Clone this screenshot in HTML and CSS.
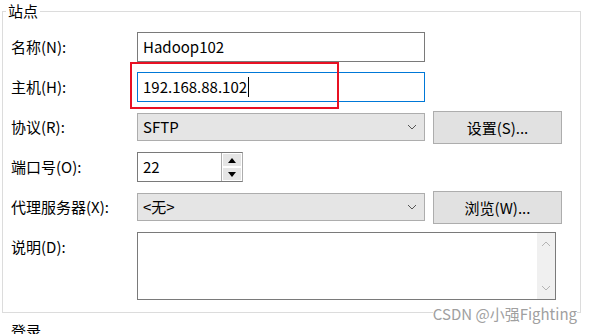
FILE: index.html
```html
<!DOCTYPE html>
<html lang="zh-CN">
<head>
  <meta charset="UTF-8">
  <title>站点</title>
  <link rel="stylesheet" href="styles.css">
</head>
<body>
  <fieldset class="group">
    <legend>站点</legend>

    <div class="row">
      <label class="label">名称(N):</label>
      <div class="field text-box">Hadoop102</div>
    </div>

    <div class="row">
      <label class="label">主机(H):</label>
      <div class="field text-box focused">192.168.88.102<span class="caret"></span></div>
    </div>

    <div class="row">
      <label class="label">协议(R):</label>
      <div class="field combo">
        <span>SFTP</span>
        <svg class="chevron" width="10" height="6" viewBox="0 0 10 6"><polyline points="1,1 5,5 9,1" fill="none" stroke="#555" stroke-width="1"/></svg>
      </div>
      <button class="btn">设置(S)...</button>
    </div>

    <div class="row">
      <label class="label">端口号(O):</label>
      <div class="spin">
        <div class="spin-value">22</div>
        <div class="spin-btns">
          <div class="spin-btn"><svg width="8" height="5" viewBox="0 0 8 5"><polygon points="0,5 8,5 4,0" fill="#000"/></svg></div>
          <div class="spin-btn"><svg width="8" height="5" viewBox="0 0 8 5"><polygon points="0,0 8,0 4,5" fill="#000"/></svg></div>
        </div>
      </div>
    </div>

    <div class="row">
      <label class="label">代理服务器(X):</label>
      <div class="field combo">
        <span>&lt;无&gt;</span>
        <svg class="chevron" width="10" height="6" viewBox="0 0 10 6"><polyline points="1,1 5,5 9,1" fill="none" stroke="#555" stroke-width="1"/></svg>
      </div>
      <button class="btn">浏览(W)...</button>
    </div>

    <div class="row row-top">
      <label class="label label-top">说明(D):</label>
      <div class="memo">
        <div class="memo-text"></div>
        <div class="scrollbar">
          <svg width="10" height="6" viewBox="0 0 10 6"><polyline points="1,5 5,1 9,5" fill="none" stroke="#b4b4b4" stroke-width="1"/></svg>
          <svg width="10" height="6" viewBox="0 0 10 6"><polyline points="1,1 5,5 9,1" fill="none" stroke="#b4b4b4" stroke-width="1"/></svg>
        </div>
      </div>
    </div>
  </fieldset>

  <div class="next-title">登录</div>

  <div class="highlight"></div>
  <div class="watermark">CSDN @小强Fighting</div>
</body>
</html>
```

FILE: styles.css
```css
body {
  margin: 0;
  width: 591px;
  height: 334px;
  overflow: hidden;
  position: relative;
  background-color: #fff;
  font-family: "Noto Sans CJK SC", "Noto Sans", sans-serif;
  font-size: 15px;
  color: #000;
}

.group {
  margin: 1px 10px 0 2px;
  padding: 6px 17px 12px 8px;
  border: 1px solid #dcdcdc;
}

.group legend {
  padding: 0 2px;
  margin-left: -5px;
  line-height: 20px;
  font-size: 15px;
}

.row {
  display: flex;
  align-items: center;
  height: 40px;
}

.row-top {
  align-items: flex-start;
  height: auto;
  padding-top: 5px;
}

.label {
  width: 126px;
  flex-shrink: 0;
  line-height: 20px;
}

.label-top {
  margin-top: 5px;
}

.field {
  width: 288px;
  box-sizing: border-box;
  display: flex;
  align-items: center;
  padding: 0 5px;
  line-height: 20px;
}

.text-box {
  height: 30px;
  border: 1px solid #7a7a7a;
  background-color: #fff;
}

.text-box.focused {
  border-color: #0078d7;
}

.caret {
  display: inline-block;
  width: 1px;
  height: 20px;
  background-color: #000;
  margin-left: 1px;
}

.combo {
  height: 28px;
  border: 1px solid #adadad;
  background-color: #e5e5e5;
  justify-content: space-between;
  padding-right: 7px;
}

.btn {
  margin-left: 8px;
  width: 129px;
  height: 33px;
  border: 1px solid #adadad;
  background-color: #e1e1e1;
  font-family: inherit;
  font-size: 15px;
  color: #000;
  padding: 0;
}

.spin {
  display: flex;
  width: 106px;
  height: 30px;
  box-sizing: border-box;
  border: 1px solid #7a7a7a;
  border-right-color: #adadad;
}

.spin-value {
  flex: 1;
  padding: 0 5px;
  line-height: 28px;
}

.spin-btns {
  display: flex;
  flex-direction: column;
  width: 20px;
  border-left: 1px solid #adadad;
}

.spin-btn {
  flex: 1;
  display: flex;
  align-items: center;
  justify-content: center;
  background-color: #e5e5e5;
  border: 1px solid #fff;
}

.memo {
  display: flex;
  width: 419px;
  height: 68px;
  box-sizing: border-box;
  border: 1px solid #7a7a7a;
  background-color: #fff;
}

.memo-text {
  flex: 1;
}

.scrollbar {
  width: 18px;
  background-color: #f0f0f0;
  display: flex;
  flex-direction: column;
  justify-content: space-between;
  align-items: center;
  padding: 8px 0;
}

.next-title {
  margin: 8px 0 0 11px;
  line-height: 20px;
}

.highlight {
  position: absolute;
  left: 130px;
  top: 62px;
  width: 205px;
  height: 43px;
  border: 2px solid #e81123;
}

.watermark {
  position: absolute;
  right: 14px;
  top: 304px;
  font-size: 15px;
  color: #a0a0a0;
  background-color: #fff;
  line-height: 20px;
}
```
